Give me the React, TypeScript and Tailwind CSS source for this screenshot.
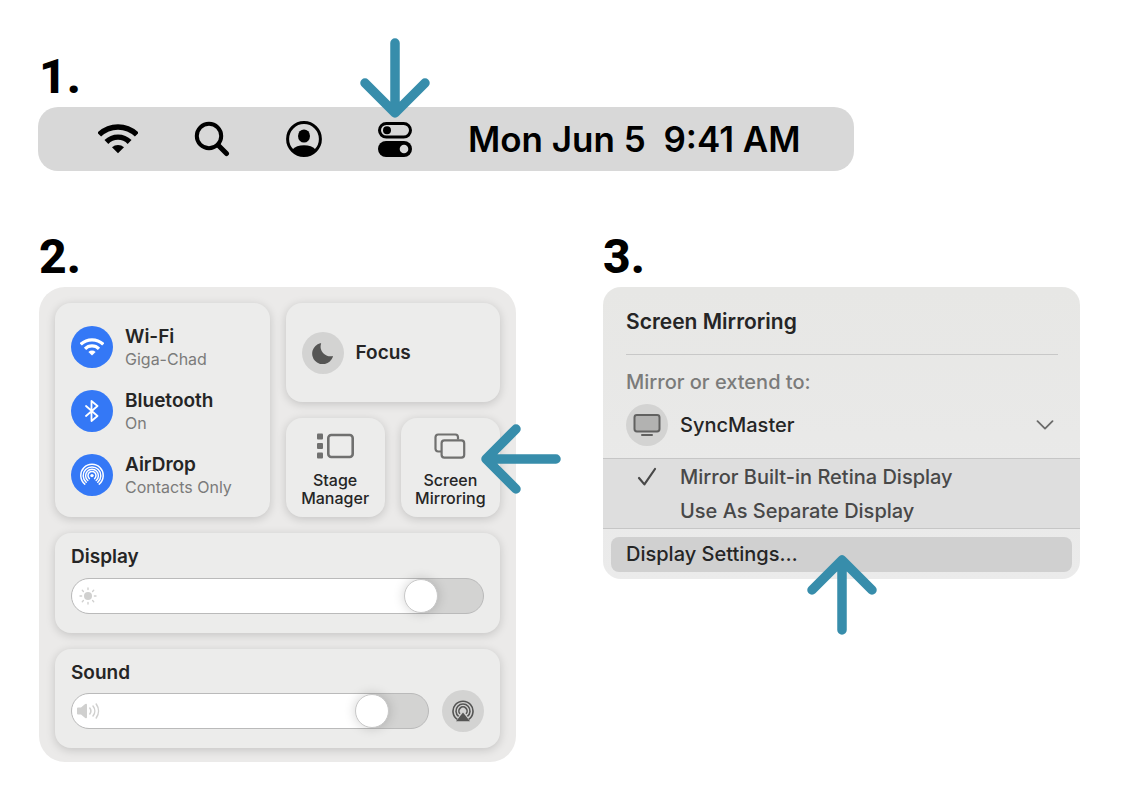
import * as React from "react"

const arrows = {
  down: { width: 70, height: 80, d: "M35 5v70M5 45l30 30 30-30" },
  up: { width: 70, height: 80, d: "M35 75V5M5 35L35 5l30 30" },
  left: { width: 80, height: 70, d: "M75 35H5M35 5L5 35l30 30" },
} as const

function Arrow({ direction, className }: { direction: keyof typeof arrows; className: string }) {
  const { width, height, d } = arrows[direction]
  return (
    <svg
      width={width}
      height={height}
      viewBox={`0 0 ${width} ${height}`}
      fill="none"
      stroke="#378dab"
      strokeWidth="9.5"
      strokeLinecap="round"
      strokeLinejoin="round"
      className={`pointer-events-none absolute z-10 max-w-none ${className}`}
      aria-hidden="true"
    >
      <path d={d} />
    </svg>
  )
}

function WifiIcon({ className }: { className: string }) {
  return (
    <svg viewBox="0 0 40 30" className={className} fill="none" stroke="currentColor" strokeWidth="5.4" aria-hidden="true">
      <path d="M1.2 10.7A26.7 26.7 0 0 1 38.8 10.7" />
      <path d="M8.4 18A16.3 16.3 0 0 1 31.6 18" />
      <path d="M20 29.3L14 23.3A8.8 8.8 0 0 1 26 23.3Z" fill="currentColor" stroke="none" />
    </svg>
  )
}

function SearchIcon() {
  return (
    <svg viewBox="0 0 36 36" className="size-9" fill="none" stroke="currentColor" strokeLinecap="round" aria-hidden="true">
      <circle cx="15" cy="15" r="12.2" strokeWidth="4" />
      <path d="M24 24L32.5 32.5" strokeWidth="5" />
    </svg>
  )
}

function PersonIcon() {
  return (
    <svg viewBox="0 0 36 36" className="size-9" aria-hidden="true">
      <circle cx="18" cy="18" r="16.4" fill="none" stroke="currentColor" strokeWidth="3" />
      <ellipse cx="18" cy="15" rx="6" ry="6.6" fill="currentColor" />
      <path d="M6 29C9 25.6 13 24.2 18 24.2S27 25.6 30 29C27 33 23 35 18 35S9 33 6 29Z" fill="currentColor" />
    </svg>
  )
}

function ControlCenterIcon() {
  return (
    <svg viewBox="0 0 34 35" className="h-[35px] w-[34px]" fill="currentColor" aria-hidden="true">
      <rect x="1.5" y="1.5" width="31" height="13.6" rx="6.8" fill="none" stroke="currentColor" strokeWidth="3" />
      <circle cx="9" cy="8.3" r="4" />
      <rect y="19" width="34" height="16" rx="8" />
      <circle cx="26" cy="27" r="4.3" className="fill-[#d8d8d8]" />
    </svg>
  )
}

function BluetoothIcon() {
  return (
    <svg viewBox="0 0 14 22" className="h-[22px] w-[14px]" fill="none" stroke="currentColor" strokeWidth="1.8" strokeLinejoin="round" strokeLinecap="round" aria-hidden="true">
      <path d="M1 6l11.5 10L6.5 21V1l6 5L1 16" />
    </svg>
  )
}

function AirDropIcon() {
  return (
    <svg viewBox="0 0 24 24" className="size-6" fill="none" stroke="currentColor" strokeWidth="1.5" strokeLinecap="round" aria-hidden="true">
      <circle cx="12" cy="12.6" r="1.7" fill="currentColor" stroke="none" />
      <path d="M9.4 15.6A4 4 0 1 1 14.6 15.6" />
      <path d="M7.8 17.5A6.4 6.4 0 1 1 16.2 17.5" />
      <path d="M6.2 19.3A8.8 8.8 0 1 1 17.8 19.3" />
      <path d="M4.8 21.1A11.2 11.2 0 1 1 19.2 21.1" />
    </svg>
  )
}

function MoonIcon() {
  return (
    <svg viewBox="0 0 22 22" className="size-[22px]" fill="currentColor" aria-hidden="true">
      <path d="M8.2 1.3C9 .9 9.3 1.3 9 2A9.6 9.6 0 0 0 19.8 14.2C20.7 13.9 21.1 14.4 20.8 15A10.6 10.6 0 1 1 8.2 1.3Z" />
    </svg>
  )
}

function StageManagerIcon() {
  return (
    <svg viewBox="0 0 38 26" className="h-[26px] w-[38px]" fill="currentColor" aria-hidden="true">
      <rect x="1" y="0.5" width="6" height="6" rx="1" />
      <rect x="1" y="10" width="6" height="6" rx="1" />
      <rect x="1" y="19.5" width="6" height="6" rx="1" />
      <rect x="12.3" y="2" width="24.4" height="22" rx="3" fill="none" stroke="currentColor" strokeWidth="2.6" />
    </svg>
  )
}

function ScreenMirroringIcon() {
  return (
    <svg viewBox="0 0 32 26" className="h-[26px] w-8" fill="none" stroke="currentColor" strokeWidth="2.2" aria-hidden="true">
      <path d="M7 18.5H4.2A2.8 2.8 0 0 1 1.5 15.8V4.2A2.8 2.8 0 0 1 4.2 1.5H21.4A2.8 2.8 0 0 1 24 4.2V6.5" />
      <rect x="7.6" y="7.4" width="22.6" height="17.2" rx="2.8" />
    </svg>
  )
}

function SunIcon() {
  return (
    <svg viewBox="0 0 18 18" className="size-[18px]" fill="none" stroke="currentColor" strokeWidth="1.4" strokeLinecap="round" aria-hidden="true">
      <circle cx="9" cy="9" r="4" fill="currentColor" stroke="none" />
      <path d="M9 1v1.6M9 15.4V17M1 9h1.6M15.4 9H17M3.3 3.3l1.1 1.1M13.6 13.6l1.1 1.1M3.3 14.7l1.1-1.1M13.6 4.4l1.1-1.1" />
    </svg>
  )
}

function SpeakerIcon() {
  return (
    <svg viewBox="0 0 24 18" className="h-[18px] w-6" fill="none" stroke="currentColor" strokeWidth="1.5" strokeLinecap="round" aria-hidden="true">
      <path d="M1 6.5Q1 5.5 2 5.5H5L9.2 2Q11 1 11 3V15Q11 17 9.2 16L5 12.5H2Q1 12.5 1 11.5Z" fill="currentColor" stroke="none" />
      <path d="M13.8 6A5 5 0 0 1 13.8 12M17 4A8 8 0 0 1 17 14M20.2 2A12 12 0 0 1 20.2 16" />
    </svg>
  )
}

function AirPlayIcon() {
  return (
    <svg viewBox="0 0 22 22" className="size-[22px]" fill="none" stroke="currentColor" strokeWidth="1.6" aria-hidden="true">
      <path d="M5.3 19.4A10 10 0 1 1 16.7 19.4" />
      <path d="M6.6 16.4A7 7 0 1 1 15.4 16.4" />
      <path d="M8 13.8A4.1 4.1 0 1 1 14 13.8" />
      <path d="M11 12.6L18 21.2H4Z" fill="currentColor" stroke="none" />
    </svg>
  )
}

function DisplayIcon() {
  return (
    <svg viewBox="0 0 28 24" className="h-6 w-7" stroke="currentColor" strokeWidth="2" strokeLinecap="round" aria-hidden="true">
      <rect x="1.5" y="2" width="25" height="16.4" rx="2.4" className="fill-[#b2b2b1]" />
      <path d="M9 22H19" />
    </svg>
  )
}

const connections = [
  { title: "Wi-Fi", status: "Giga-Chad", icon: <WifiIcon className="h-[18px] w-6" /> },
  { title: "Bluetooth", status: "On", icon: <BluetoothIcon /> },
  { title: "AirDrop", status: "Contacts Only", icon: <AirDropIcon /> },
]

const card = "rounded-2xl bg-[#ececeb] shadow-[0_2px_10px_rgba(0,0,0,0.17)]"

function StepNumber({ children }: { children: React.ReactNode }) {
  return (
    <h2 className="mb-[6px] font-['Roboto',sans-serif] text-5xl leading-[48px] font-extrabold">{children}</h2>
  )
}

function LevelSlider({ id, initial, icon }: { id: string; initial: number; icon: React.ReactNode }) {
  const [value, setValue] = React.useState(initial)
  const stop = `calc((100% - 34px) * ${value / 100} + 17px)`

  return (
    <div className="relative flex flex-1">
      <input
        id={id}
        type="range"
        value={value}
        onChange={(event) => setValue(Number(event.target.value))}
        style={{ backgroundImage: `linear-gradient(to right, #fff ${stop}, transparent ${stop})` }}
        className="h-9 w-full min-w-0 appearance-none rounded-full border border-[#bababa] bg-[#d3d3d2] [&::-webkit-slider-thumb]:size-[34px] [&::-webkit-slider-thumb]:appearance-none [&::-webkit-slider-thumb]:rounded-full [&::-webkit-slider-thumb]:border [&::-webkit-slider-thumb]:border-[#c8c8c8] [&::-webkit-slider-thumb]:bg-white [&::-webkit-slider-thumb]:shadow-[0_0_12px_rgba(0,0,0,0.18)]"
      />
      <span className="pointer-events-none absolute inset-y-0 left-[5px] flex w-6 items-center justify-center text-[#d0d0cf]">
        {icon}
      </span>
    </div>
  )
}

function MenuBar() {
  return (
    <div className="-ml-px flex h-16 w-fit items-center gap-14 rounded-[20px] bg-[#d8d8d8] pr-[53px] pl-[60px]">
      <button aria-label="Wi-Fi">
        <WifiIcon className="h-[30px] w-10" />
      </button>
      <button aria-label="Search">
        <SearchIcon />
      </button>
      <button aria-label="User">
        <PersonIcon />
      </button>
      <button aria-label="Control Center" className="relative">
        <ControlCenterIcon />
        <Arrow direction="down" className="bottom-full left-1/2 mb-1 -translate-x-1/2" />
      </button>
      <time className="text-[35px] font-semibold whitespace-pre">Mon Jun 5  9:41 AM</time>
    </div>
  )
}

function ControlCenter() {
  return (
    <div className="flex flex-col gap-4 rounded-[26px] bg-[#ebeae9] p-4 pb-[14px] text-[#252525]">
      <div className="grid grid-cols-2 gap-4">
        <div className={`${card} flex h-[214px] flex-col justify-center gap-[22px] px-4 pt-[2px]`}>
          {connections.map(({ title, status, icon }) => (
            <button key={title} className="flex h-[42px] items-center gap-3 text-left">
              <span className="flex size-[42px] shrink-0 items-center justify-center rounded-full bg-[#3478f6] text-white">
                {icon}
              </span>
              <span className="pt-[2px]">
                <span className="block text-[19px] leading-[22px] font-semibold">{title}</span>
                <span className="block text-base leading-[22px] text-[#7b7b7a]">{status}</span>
              </span>
            </button>
          ))}
        </div>

        <div className="grid grid-cols-2 grid-rows-2 gap-4">
          <button className={`${card} col-span-2 flex items-center gap-3 px-4 text-left`}>
            <span className="flex size-[42px] items-center justify-center rounded-full bg-[#d3d3d2] text-[#555554]">
              <MoonIcon />
            </span>
            <span className="pt-[2px] text-[19px] font-semibold">Focus</span>
          </button>
          <button className={`${card} flex flex-col items-center justify-center gap-3 pt-1 text-base leading-[18px] font-medium`}>
            <span className="text-[#70706f]">
              <StageManagerIcon />
            </span>
            <span>Stage<br />Manager</span>
          </button>
          <button className={`${card} relative flex flex-col items-center justify-center gap-3 pt-1 text-base leading-[18px] font-medium`}>
            <span className="text-[#70706f]">
              <ScreenMirroringIcon />
            </span>
            <span>Screen<br />Mirroring</span>
            <Arrow direction="left" className="top-[6px] left-20" />
          </button>
        </div>
      </div>

      <div className={`${card} h-[100px] px-4 pt-3`}>
        <label htmlFor="display" className="mb-[9px] block text-[19px] leading-6 font-semibold">Display</label>
        <LevelSlider id="display" initial={88} icon={<SunIcon />} />
      </div>

      <div className={`${card} h-[99px] px-4 pt-3`}>
        <label htmlFor="sound" className="mb-[5px] block text-[19px] leading-6 font-semibold">Sound</label>
        <div className="flex items-center gap-[13px]">
          <LevelSlider id="sound" initial={88} icon={<SpeakerIcon />} />
          <button aria-label="AirPlay" className="flex size-[42px] items-center justify-center rounded-full bg-[#d3d3d2] text-[#555554]">
            <AirPlayIcon />
          </button>
        </div>
      </div>
    </div>
  )
}

function ScreenMirroring() {
  return (
    <div className="rounded-[18px] bg-linear-to-b from-[#e7e7e5] to-[#ebebeb] text-xl text-[#252525]">
      <div className="pr-[22px] pl-[23px]">
        <h3 className="border-b border-[#c8c8c8] pt-[21px] pb-[18px] text-[21px] leading-7 font-semibold">Screen Mirroring</h3>
        <p className="pt-[13px] pb-2 leading-7 font-medium text-[#7b7b7a]">Mirror or extend to:</p>
        <button className="mb-3 flex w-full items-center gap-3 text-left font-[450]">
          <span className="flex size-[42px] items-center justify-center rounded-full bg-[#d3d3d2] text-[#616160]">
            <DisplayIcon />
          </span>
          <span className="flex-1">SyncMaster</span>
          <svg viewBox="0 0 18 10" className="mr-1 h-[10px] w-[18px]" fill="none" stroke="#6b6b6a" strokeWidth="1.8" strokeLinecap="round" strokeLinejoin="round" aria-hidden="true">
            <path d="M1.5 1.2L9 8.6l7.5-7.4" />
          </svg>
        </button>
      </div>

      <div className="border-y border-[#c6c6c6] bg-[#dedede] font-[450] text-[#484848]">
        <button className="flex h-[35px] w-full items-center text-left">
          <span className="flex w-[77px] justify-center pl-[10px]">
            <svg viewBox="0 0 20 20" className="size-5" fill="none" stroke="currentColor" strokeWidth="2.2" strokeLinecap="round" strokeLinejoin="round" aria-hidden="true">
              <path d="M2 11l5.4 6.4L18 2" />
            </svg>
          </span>
          Mirror Built-in Retina Display
        </button>
        <button className="flex h-[34px] w-full items-center pl-[77px] text-left">Use As Separate Display</button>
      </div>

      <div className="p-2 pb-[7px]">
        <button className="relative flex h-[35px] w-full items-center rounded-lg bg-[#d0d0d0] pb-[2px] pl-[15px] text-left font-[450]">
          Display Settings…
          <Arrow direction="up" className="top-[18px] left-1/2 -translate-x-1/2" />
        </button>
      </div>
    </div>
  )
}

export default function App() {
  return (
    <main className="min-h-screen bg-white pt-[53px] pr-[44px] pb-8 pl-[39px] font-['Inter',sans-serif] text-black">
      <section className="mb-[62px]">
        <StepNumber>1.</StepNumber>
        <MenuBar />
      </section>

      <div className="grid grid-cols-2 items-start gap-[87px]">
        <section>
          <StepNumber>2.</StepNumber>
          <ControlCenter />
        </section>
        <section>
          <StepNumber>3.</StepNumber>
          <ScreenMirroring />
        </section>
      </div>
    </main>
  )
}
